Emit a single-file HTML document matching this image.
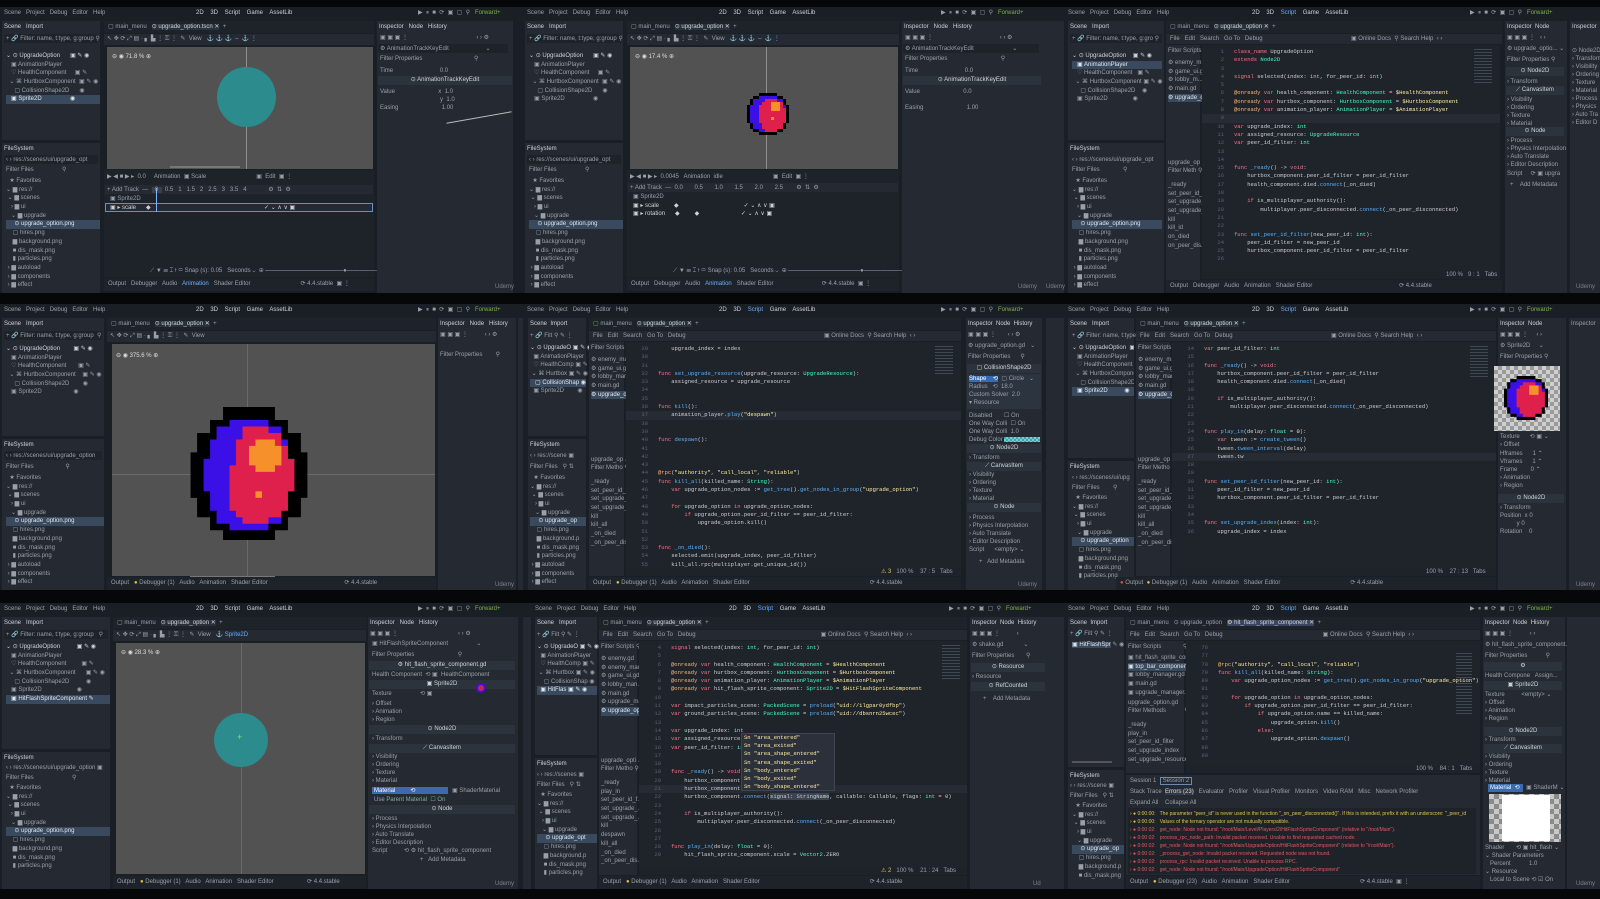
<!DOCTYPE html>
<html><head><meta charset="utf-8">
<style>
*{box-sizing:border-box}
body{margin:0;width:1600px;height:899px;background:#060708;position:relative;overflow:hidden;font-family:"Liberation Sans",sans-serif;font-size:6px;color:#9aa0a8}
.c{position:absolute;height:286px;background:#1a1e25;overflow:hidden}
.p{position:absolute;background:#242932}
.d{position:absolute;background:#1e232a}
.t{position:absolute;white-space:pre;line-height:8px}
.menu{position:absolute;left:0;top:0;right:0;height:13px;background:#1a1e25}
.sel{background:#3a4a5e;color:#dfe6ee}
.hl{color:#cfd3d8}
.vp{position:absolute;background:#525252}
.code{position:absolute;background:#1f232a;font-family:"Liberation Mono",monospace;font-size:5.5px;color:#cdcfd2;overflow:hidden}
.code div{height:8.3px;line-height:8.3px;white-space:pre}
.n{color:#5b6370;display:inline-block;width:22px;text-align:right;margin-right:10px}
.k{color:#ff7085}.f{color:#57b3ff}.y{color:#42ffc2}.s{color:#ffeda1}.a{color:#ffb373}.g{color:#8a919b}
.tree div{height:8.7px;line-height:8.7px;white-space:pre}
.btab{position:absolute;height:13px;background:#1e232a;line-height:13px;white-space:pre;padding-left:4px;overflow:hidden}
.ihead{position:absolute;height:9px;background:#2d333d;color:#cfd3d8;text-align:center;line-height:9px}
.udemy{position:absolute;color:#7d838b;font-size:6px}
</style></head><body>

<!-- Cell 1 -->
<div class="c" style="left:0;top:7px;width:523px">
 <div class="menu"><span class="t" style="left:4px;top:2px">Scene   Project   Debug   Editor   Help</span><span class="t hl" style="left:196px;top:2px">2D    3D    Script    Game    AssetLib</span><span class="t" style="left:418px;top:2px">▶  ⏸  ■  ⟳  ▣  ▢  ⚲   <span style="color:#7fb24a">Forward+</span></span></div>
 <div class="p" style="left:2px;top:14px;width:98px;height:119px"></div>
 <div class="t hl" style="left:4px;top:16px">Scene   Import</div>
 <div class="d" style="left:4px;top:27px;width:94px;height:9px"></div>
 <div class="t" style="left:6px;top:28px">+ 🔗 Filter: name, t:type, g:group ⚲</div>
 <div class="tree t" style="left:6px;top:45px;width:94px"><div class="hl">⌄ ⊙ UpgradeOption      ▣ ✎ ◉</div><div>   ▣ AnimationPlayer</div><div>   ♡ HealthComponent     ▣ ✎</div><div>  ⌄ ⌘ HurtboxComponent  ▣ ✎ ◉</div><div>     ▢ CollisionShape2D      ◉</div><div class="sel">   ▣ Sprite2D                 ◉</div></div>
 <div class="p" style="left:2px;top:136px;width:98px;height:150px"></div>
 <div class="t hl" style="left:4px;top:138px">FileSystem</div>
 <div class="d" style="left:4px;top:148px;width:94px;height:9px"></div>
 <div class="t" style="left:6px;top:149px">‹ › res://scenes/ui/upgrade_opt</div>
 <div class="t" style="left:6px;top:159px">Filter Files                 ⚲</div>
 <div class="tree t" style="left:6px;top:170px;width:94px"><div>  ★ Favorites</div><div>⌄ ▆ res://</div><div> ⌄ ▆ scenes</div><div>   › ▆ ui</div><div>   ⌄ ▆ upgrade</div><div class="sel">     ⊙ upgrade_option.png</div><div>    ▢ hires.png</div><div>    ▆ background.png</div><div>    ■ dis_mask.png</div><div>    ▮ particles.png</div><div> › ▆ autoload</div><div> › ▆ components</div><div> › ▆ effect</div></div>
 <div class="p" style="left:104px;top:14px;width:270px;height:12px;background:#1e232a"></div>
 <div class="t" style="left:108px;top:16px">▢ main_menu   <span class="hl" style="background:#2b313b">⊙ upgrade_option.tscn ✕</span>  +</div>
 <div class="p" style="left:104px;top:27px;width:270px;height:11px"></div>
 <div class="t" style="left:107px;top:28px">↖ ✥ ⟳ ⤢ ▤ · ▖ ▙ ⋮ ⚿ ⋮  ✎  View   <span style="color:#6ab0ff">⚓ ⚓ ⚓ ⇔ ⚓ ⋮</span></div>
 <div class="vp" style="left:107px;top:40px;width:266px;height:122px"></div>
 <div style="position:absolute;left:246px;top:40px;width:1px;height:122px;background:#8e8e8e"></div>
 <div style="position:absolute;left:217px;top:60px;width:59px;height:60px;border-radius:50%;background:#2b8b8d"></div>
 <div class="t" style="left:112px;top:46px;color:#ddd">⊖ ◉ 71.8 % ⊕</div>
 <div style="position:absolute;left:170px;top:159px;width:70px;height:2px;background:#777"></div>
 <div class="d" style="left:104px;top:163px;width:270px;height:107px"></div>
 <div class="t" style="left:107px;top:166px">▶ ◀ ■ ▶ ▸  0.0     Animation  ▣ Scale                              ▣  Edit  ▣ ⋮</div>
 <div class="p" style="left:105px;top:178px;width:268px;height:9px"></div>
 <div class="t" style="left:107px;top:179px">+ Add Track  —  <span style="background:#3a404a">  0  </span>  0.5   1   1.5   2   2.5   3   3.5   4             ⚙  ⇅  ⚙</div>
 <div class="t" style="left:110px;top:188px">▣ Sprite2D</div>
 <div style="position:absolute;left:105px;top:196px;width:268px;height:9px;border:1px solid #6a90c0;background:#242a33"></div>
 <div class="t" style="left:110px;top:197px;color:#cfd3d8">▣ ▸ scale      ◆                                                                    ✓ ⌄ ∧ ∨ ▣</div>
 <div style="position:absolute;left:156px;top:181px;width:1px;height:24px;background:#7fb4ff"></div>
 <div class="d" style="left:104px;top:258px;width:270px;height:12px"></div>
 <div class="t" style="left:150px;top:260px">⟋ ▼ ☰ ⌶ ⟊ ▭ Snap (s): 0.05   Seconds ⌄  ⊕ ━━━━━━━━━━━━━●━━━━━━━━━━━━ ⇥</div>
 <div class="btab" style="left:104px;top:271px;width:270px">Output   Debugger   Audio   <span style="color:#6ab0ff">Animation</span>   Shader Editor                              ⟳ 4.4.stable  ▣ ⋮</div>
 <div class="p" style="left:377px;top:14px;width:136px;height:272px"></div>
 <div class="t hl" style="left:379px;top:16px">Inspector   Node   History</div>
 <div class="t" style="left:380px;top:27px">▣ ▣ ▣ ⋮                                         ‹ › ⚙</div>
 <div class="d" style="left:378px;top:37px;width:130px;height:9px"></div>
 <div class="t" style="left:380px;top:38px">⚙ AnimationTrackKeyEdit                      ⌄</div>
 <div class="t" style="left:380px;top:48px">Filter Properties                               ⚲</div>
 <div class="t" style="left:380px;top:60px">Time                            0.0</div>
 <div class="ihead" style="left:378px;top:69px;width:134px">⊙ AnimationTrackKeyEdit</div>
 <div class="t" style="left:380px;top:81px">Value                          x  1.0<br>                                    y  1.0<br>Easing                          1.00</div>
 <div style="position:absolute;left:446px;top:110px;width:66px;height:1px;background:#bbb;transform:rotate(-10deg)"></div>
 <div class="udemy" style="left:495px;top:277px">Udemy</div>
</div>

<!-- Cell 2 -->
<div class="c" style="left:523px;top:7px;width:523px">
 <div class="menu"><span class="t" style="left:4px;top:2px">Scene   Project   Debug   Editor   Help</span><span class="t hl" style="left:196px;top:2px">2D    3D    Script    Game    AssetLib</span><span class="t" style="left:418px;top:2px">▶  ⏸  ■  ⟳  ▣  ▢  ⚲   <span style="color:#7fb24a">Forward+</span></span></div>
 <div class="p" style="left:2px;top:14px;width:98px;height:119px"></div>
 <div class="t hl" style="left:4px;top:16px">Scene   Import</div>
 <div class="d" style="left:4px;top:27px;width:94px;height:9px"></div>
 <div class="t" style="left:6px;top:28px">+ 🔗 Filter: name, t:type, g:group ⚲</div>
 <div class="tree t" style="left:6px;top:45px;width:94px"><div class="hl">⌄ ⊙ UpgradeOption      ▣ ✎ ◉</div><div>   ▣ AnimationPlayer</div><div>   ♡ HealthComponent     ▣ ✎</div><div>  ⌄ ⌘ HurtboxComponent  ▣ ✎ ◉</div><div>     ▢ CollisionShape2D      ◉</div><div>   ▣ Sprite2D                 ◉</div></div>
 <div class="p" style="left:2px;top:136px;width:98px;height:150px"></div>
 <div class="t hl" style="left:4px;top:138px">FileSystem</div>
 <div class="d" style="left:4px;top:148px;width:94px;height:9px"></div>
 <div class="t" style="left:6px;top:149px">‹ › res://scenes/ui/upgrade_opt</div>
 <div class="t" style="left:6px;top:159px">Filter Files                 ⚲</div>
 <div class="tree t" style="left:6px;top:170px;width:94px"><div>  ★ Favorites</div><div>⌄ ▆ res://</div><div> ⌄ ▆ scenes</div><div>   › ▆ ui</div><div>   ⌄ ▆ upgrade</div><div class="sel">     ⊙ upgrade_option.png</div><div>    ▢ hires.png</div><div>    ▆ background.png</div><div>    ■ dis_mask.png</div><div>    ▮ particles.png</div><div> › ▆ autoload</div><div> › ▆ components</div><div> › ▆ effect</div></div>
 <div class="p" style="left:104px;top:14px;width:272px;height:12px;background:#1e232a"></div>
 <div class="t" style="left:108px;top:16px">▢ main_menu   <span class="hl" style="background:#2b313b">⊙ upgrade_option ✕</span>  +</div>
 <div class="p" style="left:104px;top:27px;width:272px;height:11px"></div>
 <div class="t" style="left:107px;top:28px">↖ ✥ ⟳ ⤢ ▤ · ▖ ▙ ⋮ ⚿ ⋮  ✎  View   <span style="color:#6ab0ff">⚓ ⚓ ⚓ ⇔ ⚓ ⋮</span></div>
 <div class="vp" style="left:107px;top:40px;width:268px;height:122px"></div>
 <div style="position:absolute;left:243px;top:40px;width:1px;height:122px;background:#8e8e8e"></div>
 <svg style="position:absolute;left:224px;top:85px" width="42" height="44" viewBox="0 0 14 14"><path fill="#000" d="M4 0h6v1h2v1h1v2h1v6h-1v2h-1v1h-2v1H4v-1H2v-1H1v-2H0V4h1V2h1V1h2z"/><path fill="#3a10e6" d="M4 1h6v1h2v2h1v6h-1v2h-2v1H4v-1H2v-2H1V4h1V2h2z"/><path fill="#e0204c" d="M6 2h4v1h2v2h1v5h-1v2h-2v1H6v-1H5v-2H4V4h1V3h1z"/><rect fill="#f5902a" x="8" y="3" width="3" height="3"/><rect fill="#f5902a" x="8" y="8" width="1" height="1"/></svg>
 <div class="t" style="left:112px;top:46px;color:#ddd">⊖ ◉ 17.4 % ⊕</div>
 <div class="d" style="left:104px;top:163px;width:272px;height:107px"></div>
 <div class="t" style="left:107px;top:166px">▶ ◀ ■ ▶ ▸  0.0045   Animation  idle                              ▣  Edit  ▣ ⋮</div>
 <div class="p" style="left:105px;top:176px;width:270px;height:9px"></div>
 <div class="t" style="left:107px;top:177px">+ Add Track  —  0.0       0.5       1.0       1.5       2.0       2.5        ⚙  ⇅  ⚙</div>
 <div class="t" style="left:110px;top:186px">▣ Sprite2D</div>
 <div class="t" style="left:110px;top:195px;color:#cfd3d8">▣ ▸ scale         ◆                                       ✓ ⌄ ∧ ∨ ▣<br>▣ ▸ rotation      ◆         ◆                         ✓ ⌄ ∧ ∨ ▣</div>
 <div class="d" style="left:104px;top:258px;width:272px;height:12px"></div>
 <div class="t" style="left:150px;top:260px">⟋ ▼ ☰ ⌶ ⟊ ▭ Snap (s): 0.05   Seconds ⌄  ⊕ ━━━━━━━━━━━━●━━━━━━━━ ⇥</div>
 <div class="btab" style="left:104px;top:271px;width:272px">Output   Debugger   Audio   <span style="color:#6ab0ff">Animation</span>   Shader Editor                             ⟳ 4.4.stable  ▣ ⋮</div>
 <div class="p" style="left:379px;top:14px;width:144px;height:272px"></div>
 <div class="t hl" style="left:381px;top:16px">Inspector   Node   History</div>
 <div class="t" style="left:382px;top:27px">▣ ▣ ▣ ⋮                                        ‹ › ⚙</div>
 <div class="d" style="left:380px;top:37px;width:136px;height:9px"></div>
 <div class="t" style="left:382px;top:38px">⚙ AnimationTrackKeyEdit                       ⌄</div>
 <div class="t" style="left:382px;top:48px">Filter Properties                                ⚲</div>
 <div class="t" style="left:382px;top:60px">Time                            0.0</div>
 <div class="ihead" style="left:380px;top:69px;width:138px">⊙ AnimationTrackKeyEdit</div>
 <div class="t" style="left:382px;top:81px">Value                          0.0<br><br>Easing                          1.00</div>
 <div class="udemy" style="left:495px;top:277px">Udemy</div>
</div>

<!-- Cell 3 -->
<div class="c" style="left:1046px;top:7px;width:554px">
 <div class="p" style="left:0;top:14px;width:18px;height:272px"></div>
 <div class="menu" style="left:20px"><span class="t" style="left:2px;top:2px">Scene   Project   Debug   Editor   Help</span><span class="t hl" style="left:186px;top:2px">2D    3D    <span style="color:#6ab0ff">Script</span>    Game    AssetLib</span><span class="t" style="left:404px;top:2px">▶  ⏸  ■  ⟳  ▣  ▢  ⚲   <span style="color:#7fb24a">Forward+</span></span></div>
 <div class="p" style="left:22px;top:14px;width:96px;height:119px"></div>
 <div class="t hl" style="left:24px;top:16px">Scene   Import</div>
 <div class="d" style="left:24px;top:27px;width:92px;height:9px"></div>
 <div class="t" style="left:26px;top:28px">+ 🔗 Filter: name, t:type, g:gro ⚲</div>
 <div class="tree t" style="left:26px;top:45px;width:90px"><div class="hl">⌄ ⊙ UpgradeOption    ▣ ✎ ◉</div><div class="sel">   ▣ AnimationPlayer</div><div>   ♡ HealthComponent   ▣ ✎</div><div>  ⌄ ⌘ HurtboxComponent ▣ ✎ ◉</div><div>     ▢ CollisionShape2D    ◉</div><div>   ▣ Sprite2D               ◉</div></div>
 <div class="p" style="left:22px;top:136px;width:96px;height:150px"></div>
 <div class="t hl" style="left:24px;top:138px">FileSystem</div>
 <div class="t" style="left:26px;top:149px">‹ › res://scenes/ui/upgrade_opt</div>
 <div class="t" style="left:26px;top:159px">Filter Files              ⚲</div>
 <div class="tree t" style="left:26px;top:170px;width:90px"><div>  ★ Favorites</div><div>⌄ ▆ res://</div><div> ⌄ ▆ scenes</div><div>   › ▆ ui</div><div>   ⌄ ▆ upgrade</div><div class="sel">     ⊙ upgrade_option.png</div><div>    ▢ hires.png</div><div>    ▆ background.png</div><div>    ■ dis_mask.png</div><div>    ▮ particles.png</div><div> › ▆ autoload</div><div> › ▆ components</div><div> › ▆ effect</div></div>
 <div class="d" style="left:120px;top:14px;width:336px;height:12px"></div>
 <div class="t" style="left:124px;top:16px">▢ main_menu   <span class="hl" style="background:#2b313b">⊙ upgrade_option ✕</span>  +</div>
 <div class="p" style="left:120px;top:27px;width:336px;height:10px"></div>
 <div class="t" style="left:124px;top:28px">File   Edit   Search   Go To   Debug                                                     ▣ Online Docs  ⚲ Search Help  ‹ ›</div>
 <div class="p" style="left:120px;top:38px;width:34px;height:236px"></div>
 <div class="t" style="left:122px;top:40px">Filter Scripts ⚲</div>
 <div class="tree t" style="left:122px;top:52px"><div>⚙ enemy_m...</div><div>⚙ game_ui.gd</div><div>⚙ lobby_m...</div><div>⚙ main.gd</div><div class="sel">⚙ upgrade_o...</div></div>
 <div class="t" style="left:122px;top:152px">upgrade_op ⇵<br>Filter Meth ⚲</div>
 <div class="tree t" style="left:122px;top:174px"><div>_ready</div><div>set_peer_id_f...</div><div>set_upgrade_...</div><div>set_upgrade_...</div><div>kill</div><div>kill_id</div><div>on_died</div><div>on_peer_dis...</div></div>
 <div class="code" style="left:156px;top:38px;width:298px;height:226px;padding-top:3px">
<div><span class="n">1</span><span class="k">class_name</span> UpgradeOption</div>
<div><span class="n">2</span><span class="k">extends</span> <span class="y">Node2D</span></div>
<div><span class="n">3</span></div>
<div><span class="n">4</span><span class="k">signal</span> selected(index: <span class="y">int</span>, for_peer_id: <span class="y">int</span>)</div>
<div><span class="n">5</span></div>
<div><span class="n">6</span><span class="a">@onready</span> <span class="k">var</span> health_component: <span class="y">HealthComponent</span> = <span class="s">$HealthComponent</span></div>
<div><span class="n">7</span><span class="a">@onready</span> <span class="k">var</span> hurtbox_component: <span class="y">HurtboxComponent</span> = <span class="s">$HurtboxComponent</span></div>
<div><span class="n">8</span><span class="a">@onready</span> <span class="k">var</span> animation_player: <span class="y">AnimationPlayer</span> = <span class="s">$AnimationPlayer</span></div>
<div style="background:#262b34"><span class="n">9</span></div>
<div><span class="n">10</span><span class="k">var</span> upgrade_index: <span class="y">int</span></div>
<div><span class="n">11</span><span class="k">var</span> assigned_resource: <span class="y">UpgradeResource</span></div>
<div><span class="n">12</span><span class="k">var</span> peer_id_filter: <span class="y">int</span></div>
<div><span class="n">13</span></div>
<div><span class="n">14</span></div>
<div><span class="n">15</span><span class="k">func</span> <span class="f">_ready</span>() -&gt; <span class="k">void</span>:</div>
<div><span class="n">16</span>    hurtbox_component.peer_id_filter = peer_id_filter</div>
<div><span class="n">17</span>    health_component.died.<span class="f">connect</span>(_on_died)</div>
<div><span class="n">18</span></div>
<div><span class="n">19</span>    <span class="k">if</span> is_multiplayer_authority():</div>
<div><span class="n">20</span>        multiplayer.peer_disconnected.<span class="f">connect</span>(_on_peer_disconnected)</div>
<div><span class="n">21</span></div>
<div><span class="n">22</span></div>
<div><span class="n">23</span><span class="k">func</span> <span class="f">set_peer_id_filter</span>(new_peer_id: <span class="y">int</span>):</div>
<div><span class="n">24</span>    peer_id_filter = new_peer_id</div>
<div><span class="n">25</span>    hurtbox_component.peer_id_filter = peer_id_filter</div>
<div><span class="n">26</span></div>
 </div>
 <div style="position:absolute;left:428px;top:42px;width:18px;height:34px;background:repeating-linear-gradient(#56606c 0 1px,transparent 1px 3px);opacity:.6"></div>
 <div class="d" style="left:156px;top:264px;width:298px;height:8px"></div>
 <div class="t" style="left:400px;top:264px">100 %   9 : 1   Tabs</div>
 <div class="btab" style="left:120px;top:273px;width:336px">Output   Debugger   Audio   Animation   Shader Editor                                                    ⟳ 4.4.stable</div>
 <div class="p" style="left:459px;top:14px;width:62px;height:272px"></div>
 <div class="t hl" style="left:461px;top:16px">Inspector  Node</div>
 <div class="t" style="left:461px;top:27px">▣ ▣ ▣ ⋮   ‹ ›</div>
 <div class="t" style="left:461px;top:38px">⚙ upgrade_optio... ⌄</div>
 <div class="t" style="left:461px;top:49px">Filter Properties ⚲</div>
 <div class="ihead" style="left:460px;top:60px;width:58px">⊙ Node2D</div>
 <div class="t" style="left:461px;top:71px">› Transform</div>
 <div class="ihead" style="left:460px;top:79px;width:58px">⟋ CanvasItem</div>
 <div class="t" style="left:461px;top:89px">› Visibility<br>› Ordering<br>› Texture<br>› Material</div>
 <div class="ihead" style="left:460px;top:120px;width:58px">⊙ Node</div>
 <div class="t" style="left:461px;top:130px">› Process<br>› Physics Interpolation<br>› Auto Translate<br>› Editor Description</div>
 <div class="t" style="left:461px;top:163px">Script     ⟳ ▣ upgra</div>
 <div class="t" style="left:464px;top:174px">+    Add Metadata</div>
 <div class="p" style="left:524px;top:14px;width:30px;height:272px"></div>
 <div class="t hl" style="left:526px;top:16px">Inspector</div>
 <div class="t" style="left:526px;top:40px">⊙ Node2D<br>› Transform<br>› Visibility<br>› Ordering<br>› Texture<br>› Material<br>› Process<br>› Physics<br>› Auto Tra<br>› Editor D</div>
 <div class="udemy" style="left:0px;top:277px">Udemy</div>
 <div class="udemy" style="left:530px;top:277px">Udemy</div>
</div>

<!-- Cell 4 -->
<div class="c" style="left:0;top:304px;width:523px">
 <div class="menu"><span class="t" style="left:4px;top:2px">Scene   Project   Debug   Editor   Help</span><span class="t hl" style="left:196px;top:2px">2D    3D    Script    Game    AssetLib</span><span class="t" style="left:418px;top:2px">▶  ⏸  ■  ⟳  ▣  ▢  ⚲   <span style="color:#7fb24a">Forward+</span></span></div>
 <div class="p" style="left:2px;top:14px;width:102px;height:118px"></div>
 <div class="t hl" style="left:4px;top:16px">Scene   Import</div>
 <div class="d" style="left:4px;top:27px;width:98px;height:9px"></div>
 <div class="t" style="left:6px;top:28px">+ 🔗 Filter: name, t:type, g:group  ⚲</div>
 <div class="tree t" style="left:6px;top:41px;width:98px"><div class="hl">⌄ ⊙ UpgradeOption        ▣ ✎ ◉</div><div>   ▣ AnimationPlayer</div><div>   ♡ HealthComponent       ▣ ✎</div><div>  ⌄ ⌘ HurtboxComponent    ▣ ✎ ◉</div><div>     ▢ CollisionShape2D        ◉</div><div>   ▣ Sprite2D                   ◉</div></div>
 <div class="p" style="left:2px;top:135px;width:102px;height:151px"></div>
 <div class="t hl" style="left:4px;top:137px">FileSystem</div>
 <div class="d" style="left:4px;top:147px;width:98px;height:9px"></div>
 <div class="t" style="left:6px;top:148px">‹ › res://scenes/ui/upgrade_option</div>
 <div class="t" style="left:6px;top:159px">Filter Files                   ⚲</div>
 <div class="tree t" style="left:6px;top:170px;width:98px"><div>  ★ Favorites</div><div>⌄ ▆ res://</div><div> ⌄ ▆ scenes</div><div>   › ▆ ui</div><div>   ⌄ ▆ upgrade</div><div class="sel">     ⊙ upgrade_option.png</div><div>    ▢ hires.png</div><div>    ▆ background.png</div><div>    ■ dis_mask.png</div><div>    ▮ particles.png</div><div> › ▆ autoload</div><div> › ▆ components</div><div> › ▆ effect</div></div>
 <div class="d" style="left:107px;top:14px;width:329px;height:12px"></div>
 <div class="t" style="left:111px;top:16px">▢ main_menu   <span class="hl" style="background:#2b313b">⊙ upgrade_option ✕</span>  +</div>
 <div class="p" style="left:107px;top:27px;width:329px;height:11px"></div>
 <div class="t" style="left:110px;top:28px">↖ ✥ ⟳ ⤢ ▤ · ▖ ▙ ⋮ ⚿ ⋮  ✎  View</div>
 <div class="vp" style="left:112px;top:40px;width:323px;height:232px"></div>
 <div style="position:absolute;left:247px;top:40px;width:1px;height:232px;background:#6a6a6a"></div>
 <div style="position:absolute;left:112px;top:170px;width:323px;height:1px;background:#6a6a6a"></div>
 <svg style="position:absolute;left:184px;top:103px" width="130" height="133" viewBox="0 0 20 20.5"><path fill="#000" d="M6 0h8v2h2v2h2v3h1v7h-1v3h-2v2h-2v2H6v-2H4v-2H2v-3H1V7h1V4h2V2h2z"/><path fill="#3a10e6" d="M7 2h6v1h2v2h1v3h1v5h-1v3h-1v2h-2v1H7v-1H5v-2H4v-3H3V8h1V5h1V3h2z"/><path fill="#e0204c" d="M9 3h4v1h2v2h1v2h1v5h-1v3h-1v1h-2v1H9v-1H8v-1H7V9h1V5h1z"/><path fill="#f5902a" d="M11 5h3v1h1v3h-1v1h-3v-1h-1V6h1z"/><rect fill="#f5902a" x="11" y="13" width="1" height="1"/></svg>
 <div class="t" style="left:116px;top:48px;color:#ddd">⊖ ◉ 375.6 % ⊕</div>
 <div style="position:absolute;left:190px;top:272px;width:85px;height:2px;background:#777"></div>
 <div class="btab" style="left:107px;top:273px;width:329px">Output   <span style="color:#e0c050">●</span> Debugger (1)   Audio   Animation   Shader Editor                                              ⟳ 4.4.stable</div>
 <div class="p" style="left:438px;top:14px;width:78px;height:272px"></div>
 <div class="t hl" style="left:440px;top:16px">Inspector   Node   History</div>
 <div class="t" style="left:440px;top:27px">▣ ▣ ▣ ⋮          ‹ › ⚙</div>
 <div class="t" style="left:440px;top:47px">Filter Properties        ⚲</div>
 <div class="p" style="left:518px;top:14px;width:5px;height:272px"></div>
 <div class="udemy" style="left:495px;top:278px">Udemy</div>
</div>

<!-- Cell 5 -->
<div class="c" style="left:523px;top:304px;width:523px">
 <div class="menu"><span class="t" style="left:4px;top:2px">Scene   Project   Debug   Editor   Help</span><span class="t hl" style="left:196px;top:2px">2D    3D    <span style="color:#6ab0ff">Script</span>    Game    AssetLib</span><span class="t" style="left:418px;top:2px">▶  ⏸  ■  ⟳  ▣  ▢  ⚲   <span style="color:#7fb24a">Forward+</span></span></div>
 <div class="p" style="left:5px;top:14px;width:58px;height:118px"></div>
 <div class="t hl" style="left:7px;top:16px">Scene  Import</div>
 <div class="t" style="left:7px;top:28px">+ 🔗 Filt ⚲ ✎ ⋮</div>
 <div class="tree t" style="left:7px;top:40px;width:56px"><div class="hl">⌄ ⊙ UpgradeO ▣ ✎ ◉</div><div>  ▣ AnimationPlayer</div><div>  ♡ HealthComp ▣ ✎</div><div> ⌄ ⌘ Hurtbox ▣ ✎ ◉</div><div class="sel">   ▢ CollisionShap ◉</div><div>  ▣ Sprite2D        ◉</div></div>
 <div class="p" style="left:5px;top:135px;width:58px;height:151px"></div>
 <div class="t hl" style="left:7px;top:137px">FileSystem</div>
 <div class="t" style="left:7px;top:148px">‹ › res://scene ▣</div>
 <div class="t" style="left:7px;top:159px">Filter Files   ⚲ ⇅</div>
 <div class="tree t" style="left:7px;top:170px;width:56px"><div>  ★ Favorites</div><div>⌄ ▆ res://</div><div> ⌄ ▆ scenes</div><div>   › ▆ ui</div><div>   ⌄ ▆ upgrade</div><div class="sel">     ⊙ upgrade_op</div><div>    ▢ hires.png</div><div>    ▆ background.p</div><div>    ■ dis_mask.png</div><div>    ▮ particles.png</div><div> › ▆ autoload</div><div> › ▆ components</div><div> › ▆ effect</div></div>
 <div class="d" style="left:66px;top:14px;width:372px;height:12px"></div>
 <div class="t" style="left:70px;top:16px"><span style="color:#7fb24a">▢</span> main_menu   <span class="hl" style="background:#2b313b">⊙ upgrade_option ✕</span>  +</div>
 <div class="p" style="left:66px;top:27px;width:372px;height:10px"></div>
 <div class="t" style="left:70px;top:28px">File   Edit   Search   Go To   Debug                                                                                   ▣ Online Docs  ⚲ Search Help  ‹ ›</div>
 <div class="p" style="left:66px;top:38px;width:35px;height:234px"></div>
 <div class="t" style="left:68px;top:40px">Filter Scripts ⚲</div>
 <div class="tree t" style="left:68px;top:52px"><div>⚙ enemy_ma...</div><div>⚙ game_ui.gd</div><div>⚙ lobby_man...</div><div>⚙ main.gd</div><div class="sel">⚙ upgrade_o...</div></div>
 <div class="t" style="left:68px;top:152px">upgrade_op ⇵<br>Filter Metho ⚲</div>
 <div class="tree t" style="left:68px;top:174px"><div>_ready</div><div>set_peer_id_f...</div><div>set_upgrade_...</div><div>set_upgrade_...</div><div>kill</div><div>kill_all</div><div>_on_died</div><div>_on_peer_dis...</div></div>
 <div class="code" style="left:103px;top:38px;width:335px;height:226px;padding-top:3px">
<div><span class="n">29</span>    upgrade_index = index</div>
<div><span class="n">30</span></div>
<div><span class="n">31</span></div>
<div><span class="n">32</span><span class="k">func</span> <span class="f">set_upgrade_resource</span>(upgrade_resource: <span class="y">UpgradeResource</span>):</div>
<div><span class="n">33</span>    assigned_resource = upgrade_resource</div>
<div><span class="n">34</span></div>
<div><span class="n">35</span></div>
<div><span class="n">36</span><span class="k">func</span> <span class="f">kill</span>():</div>
<div style="background:#262b34"><span class="n">37</span>    animation_player.<span class="f">play</span>(<span class="s">"despawn"</span>)</div>
<div><span class="n">38</span></div>
<div><span class="n">39</span></div>
<div><span class="n">40</span><span class="k">func</span> <span class="f">despawn</span>():</div>
<div><span class="n">41</span>    </div>
<div><span class="n">42</span></div>
<div><span class="n">43</span></div>
<div><span class="n">44</span><span class="a">@rpc</span>(<span class="s">"authority"</span>, <span class="s">"call_local"</span>, <span class="s">"reliable"</span>)</div>
<div><span class="n">45</span><span class="k">func</span> <span class="f">kill_all</span>(killed_name: <span class="y">String</span>):</div>
<div><span class="n">46</span>    <span class="k">var</span> upgrade_option_nodes := <span class="f">get_tree</span>().<span class="f">get_nodes_in_group</span>(<span class="s">"upgrade_option"</span>)</div>
<div><span class="n">47</span></div>
<div><span class="n">48</span>    <span class="k">for</span> upgrade_option <span class="k">in</span> upgrade_option_nodes:</div>
<div><span class="n">49</span>        <span class="k">if</span> upgrade_option.peer_id_filter == peer_id_filter:</div>
<div><span class="n">50</span>            upgrade_option.kill()</div>
<div><span class="n">51</span></div>
<div><span class="n">52</span></div>
<div><span class="n">53</span><span class="k">func</span> <span class="f">_on_died</span>():</div>
<div><span class="n">54</span>    selected.emit(upgrade_index, peer_id_filter)</div>
<div><span class="n">55</span>    kill_all.rpc(multiplayer.get_unique_id())</div>
 </div>
 <div style="position:absolute;left:412px;top:42px;width:18px;height:30px;background:repeating-linear-gradient(#56606c 0 1px,transparent 1px 3px);opacity:.6"></div>
 <div class="d" style="left:103px;top:264px;width:335px;height:8px"></div>
 <div class="t" style="left:358px;top:264px"><span style="color:#e0c050">⚠ 3</span>   100 %    37 : 5   Tabs</div>
 <div class="btab" style="left:66px;top:273px;width:372px">Output   <span style="color:#e0c050">●</span> Debugger (1)   Audio   Animation   Shader Editor                                                                        ⟳ 4.4.stable</div>
 <div class="p" style="left:443px;top:14px;width:76px;height:272px"></div>
 <div class="t hl" style="left:445px;top:16px">Inspector  Node  History</div>
 <div class="t" style="left:445px;top:27px">▣ ▣ ▣ ⋮       ‹ › ⚙</div>
 <div class="t" style="left:445px;top:38px">⚙ upgrade_option.gd   ⌄</div>
 <div class="t" style="left:445px;top:49px">Filter Properties      ⚲</div>
 <div class="ihead" style="left:444px;top:60px;width:74px">▢ CollisionShape2D</div>
 <div style="position:absolute;left:444px;top:70px;width:74px;height:35px;background:#2c3440"></div>
 <div class="t" style="left:446px;top:71px"><span style="background:#3a6ab0;color:#fff">Shape    ⟲</span>  ▢ Circle   ⌄<br>Radius   ⟲  18.0<br>Custom Solver  2.0<br>▾ Resource</div>
 <div class="t" style="left:446px;top:108px">Disabled       ☐ On<br>One Way Colli  ☐ On<br>One Way Colli  1.0<br>Debug Color</div>
 <div style="position:absolute;left:481px;top:133px;width:36px;height:5px;background:repeating-conic-gradient(#6fd0d0 0 25%,#3fa8a8 0 50%) 0 0/4px 4px"></div>
 <div class="ihead" style="left:444px;top:140px;width:74px">⊙ Node2D</div>
 <div class="t" style="left:446px;top:150px">› Transform</div>
 <div class="ihead" style="left:444px;top:158px;width:74px">⟋ CanvasItem</div>
 <div class="t" style="left:446px;top:167px">› Visibility<br>› Ordering<br>› Texture<br>› Material</div>
 <div class="ihead" style="left:444px;top:199px;width:74px">⊙ Node</div>
 <div class="t" style="left:446px;top:210px">› Process<br>› Physics Interpolation<br>› Auto Translate<br>› Editor Description<br>Script      &lt;empty&gt; ⌄</div>
 <div class="t" style="left:456px;top:254px">+   Add Metadata</div>
 <div class="udemy" style="left:495px;top:278px">Udemy</div>
</div>

<!-- Cell 6 -->
<div class="c" style="left:1046px;top:304px;width:554px">
 <div class="p" style="left:0;top:14px;width:18px;height:272px"></div>
 <div class="menu" style="left:20px"><span class="t" style="left:2px;top:2px">Scene   Project   Debug   Editor   Help</span><span class="t hl" style="left:186px;top:2px">2D    3D    <span style="color:#6ab0ff">Script</span>    Game    AssetLib</span><span class="t" style="left:404px;top:2px">▶  ⏸  ■  ⟳  ▣  ▢  ⚲   <span style="color:#7fb24a">Forward+</span></span></div>
 <div class="p" style="left:22px;top:14px;width:66px;height:140px"></div>
 <div class="t hl" style="left:24px;top:16px">Scene   Import</div>
 <div class="t" style="left:26px;top:28px">+ 🔗 Filter: name, t:type ⚲</div>
 <div class="tree t" style="left:26px;top:40px;width:62px;overflow:hidden"><div class="hl">⌄ ⊙ UpgradeOption  ▣ ✎</div><div>   ▣ AnimationPlayer</div><div>   ♡ HealthComponent</div><div>  ⌄ ⌘ HurtboxCompone</div><div>     ▢ CollisionShape2D</div><div class="sel">   ▣ Sprite2D          ◉</div></div>
 <div class="p" style="left:22px;top:157px;width:66px;height:129px"></div>
 <div class="t hl" style="left:24px;top:159px">FileSystem</div>
 <div class="t" style="left:26px;top:170px">‹ › res://scenes/ui/upg</div>
 <div class="t" style="left:26px;top:180px">Filter Files        ⚲</div>
 <div class="tree t" style="left:26px;top:190px;width:62px"><div>  ★ Favorites</div><div>⌄ ▆ res://</div><div> ⌄ ▆ scenes</div><div>   › ▆ ui</div><div>   ⌄ ▆ upgrade</div><div class="sel">     ⊙ upgrade_option</div><div>    ▢ hires.png</div><div>    ▆ background.png</div><div>    ■ dis_mask.png</div><div>    ▮ particles.png</div></div>
 <div class="d" style="left:90px;top:14px;width:360px;height:12px"></div>
 <div class="t" style="left:94px;top:16px">▢ main_menu   <span class="hl" style="background:#2b313b">⊙ upgrade_option ✕</span>  +</div>
 <div class="p" style="left:90px;top:27px;width:360px;height:10px"></div>
 <div class="t" style="left:94px;top:28px">File   Edit   Search   Go To   Debug                                                           ▣ Online Docs  ⚲ Search Help  ‹ ›</div>
 <div class="p" style="left:90px;top:38px;width:34px;height:234px"></div>
 <div class="t" style="left:92px;top:40px">Filter Scripts ⚲</div>
 <div class="tree t" style="left:92px;top:52px"><div>⚙ enemy_ma...</div><div>⚙ game_ui.gd</div><div>⚙ lobby_man...</div><div>⚙ main.gd</div><div class="sel">⚙ upgrade_o...</div></div>
 <div class="t" style="left:92px;top:152px">upgrade_op ⇵<br>Filter Metho ⚲</div>
 <div class="tree t" style="left:92px;top:174px"><div>_ready</div><div>set_peer_id_f...</div><div>set_upgrade_...</div><div>set_upgrade_...</div><div>kill</div><div>kill_all</div><div>_on_died</div><div>_on_peer_dis...</div></div>
 <div class="code" style="left:126px;top:38px;width:324px;height:226px;padding-top:3px">
<div><span class="n">14</span><span class="k">var</span> peer_id_filter: <span class="y">int</span></div>
<div><span class="n">15</span></div>
<div><span class="n">16</span><span class="k">func</span> <span class="f">_ready</span>() -&gt; <span class="k">void</span>:</div>
<div><span class="n">17</span>    hurtbox_component.peer_id_filter = peer_id_filter</div>
<div><span class="n">18</span>    health_component.died.<span class="f">connect</span>(_on_died)</div>
<div><span class="n">19</span></div>
<div><span class="n">20</span>    <span class="k">if</span> is_multiplayer_authority():</div>
<div><span class="n">21</span>        multiplayer.peer_disconnected.<span class="f">connect</span>(_on_peer_disconnected)</div>
<div><span class="n">22</span></div>
<div><span class="n">23</span></div>
<div><span class="n">24</span><span class="k">func</span> <span class="f">play_in</span>(delay: <span class="y">float</span> = <span class="s">0</span>):</div>
<div><span class="n">25</span>    <span class="k">var</span> tween := <span class="f">create_tween</span>()</div>
<div><span class="n">26</span>    tween.<span class="f">tween_interval</span>(delay)</div>
<div style="background:#262b34"><span class="n">27</span>    tween.tw</div>
<div><span class="n">28</span></div>
<div><span class="n">29</span></div>
<div><span class="n">30</span><span class="k">func</span> <span class="f">set_peer_id_filter</span>(new_peer_id: <span class="y">int</span>):</div>
<div><span class="n">31</span>    peer_id_filter = new_peer_id</div>
<div><span class="n">32</span>    hurtbox_component.peer_id_filter = peer_id_filter</div>
<div><span class="n">33</span></div>
<div><span class="n">34</span></div>
<div><span class="n">35</span><span class="k">func</span> <span class="f">set_upgrade_index</span>(index: <span class="y">int</span>):</div>
<div><span class="n">36</span>    upgrade_index = index</div>
 </div>
 <div style="position:absolute;left:424px;top:42px;width:18px;height:32px;background:repeating-linear-gradient(#56606c 0 1px,transparent 1px 3px);opacity:.6"></div>
 <div class="d" style="left:126px;top:264px;width:324px;height:8px"></div>
 <div class="t" style="left:380px;top:264px">100 %    27 : 13   Tabs</div>
 <div class="btab" style="left:70px;top:273px;width:380px"><span style="color:#e05050">●</span> Output  <span style="color:#e0c050">●</span> Debugger (1)   Audio   Animation   Shader Editor                                          ⟳ 4.4.stable</div>
 <div class="p" style="left:452px;top:14px;width:68px;height:272px"></div>
 <div class="t hl" style="left:454px;top:16px">Inspector  Node</div>
 <div class="t" style="left:454px;top:27px">▣ ▣ ▣ ⋮     ‹ ›</div>
 <div class="t" style="left:454px;top:38px">⚙ Sprite2D     ⌄</div>
 <div class="t" style="left:454px;top:49px">Filter Properties ⚲</div>
 <div style="position:absolute;left:448px;top:62px;width:66px;height:65px;background:repeating-conic-gradient(#9a9a9a 0 25%,#cfcfcf 0 50%) 0 0/8px 8px"></div>
 <svg style="position:absolute;left:458px;top:72px" width="44" height="44" viewBox="0 0 14 14"><path fill="#000" d="M4 0h6v1h2v1h1v2h1v6h-1v2h-1v1h-2v1H4v-1H2v-1H1v-2H0V4h1V2h1V1h2z"/><path fill="#3a10e6" d="M4 1h6v1h2v2h1v6h-1v2h-2v1H4v-1H2v-2H1V4h1V2h2z"/><path fill="#e0204c" d="M6 2h4v1h2v2h1v5h-1v2h-2v1H6v-1H5v-2H4V4h1V3h1z"/><rect fill="#f5902a" x="8" y="3" width="3" height="3"/></svg>
 <div class="t" style="left:454px;top:129px">Texture      ⟲ ▣ ⌄<br>› Offset</div>
 <div class="t" style="left:454px;top:146px">Hframes      1 ⌃<br>Vframes      1 ⌃<br>Frame        0 ⌃<br>› Animation<br>› Region</div>
 <div class="ihead" style="left:452px;top:190px;width:66px">⊙ Node2D</div>
 <div class="t" style="left:454px;top:200px">› Transform<br>Position  x 0<br>          y 0<br>Rotation    0</div>
 <div class="p" style="left:523px;top:14px;width:31px;height:272px"></div>
 <div class="t" style="left:525px;top:16px">Inspector</div>
 <div class="udemy" style="left:530px;top:278px">Udemy</div>
</div>

<!-- Cell 7 -->
<div class="c" style="left:0;top:603px;width:523px">
 <div class="menu"><span class="t" style="left:4px;top:2px">Scene   Project   Debug   Editor   Help</span><span class="t hl" style="left:196px;top:2px">2D    3D    Script    Game    AssetLib</span><span class="t" style="left:418px;top:2px">▶  ⏸  ■  ⟳  ▣  ▢  ⚲   <span style="color:#7fb24a">Forward+</span></span></div>
 <div class="p" style="left:2px;top:14px;width:108px;height:132px"></div>
 <div class="t hl" style="left:4px;top:16px">Scene   Import</div>
 <div class="d" style="left:4px;top:27px;width:104px;height:9px"></div>
 <div class="t" style="left:6px;top:28px">+ 🔗 Filter: name, t:type, g:group   ⚲</div>
 <div class="tree t" style="left:6px;top:40px;width:104px"><div class="hl">⌄ ⊙ UpgradeOption          ▣ ✎ ◉</div><div>   ▣ AnimationPlayer</div><div>   ♡ HealthComponent         ▣ ✎</div><div>  ⌄ ⌘ HurtboxComponent      ▣ ✎ ◉</div><div>     ▢ CollisionShape2D          ◉</div><div>   ▣ Sprite2D                     ◉</div><div class="sel">   ▣ HitFlashSpriteComponent ✎</div></div>
 <div class="p" style="left:2px;top:149px;width:108px;height:137px"></div>
 <div class="t hl" style="left:4px;top:151px">FileSystem</div>
 <div class="t" style="left:6px;top:161px">‹ › res://scenes/ui/upgrade_option ▣</div>
 <div class="t" style="left:6px;top:171px">Filter Files                       ⚲</div>
 <div class="tree t" style="left:6px;top:181px;width:104px"><div>  ★ Favorites</div><div>⌄ ▆ res://</div><div> ⌄ ▆ scenes</div><div>   › ▆ ui</div><div>   ⌄ ▆ upgrade</div><div class="sel">     ⊙ upgrade_option.png</div><div>    ▢ hires.png</div><div>    ▆ background.png</div><div>    ■ dis_mask.png</div><div>    ▮ particles.png</div></div>
 <div class="d" style="left:113px;top:14px;width:253px;height:12px"></div>
 <div class="t" style="left:117px;top:16px">▢ main_menu   <span class="hl" style="background:#2b313b">⊙ upgrade_option ✕</span>  +</div>
 <div class="p" style="left:113px;top:27px;width:253px;height:11px"></div>
 <div class="t" style="left:116px;top:28px">↖ ✥ ⟳ ⤢ ▤ · ▖ ▙ ⋮ ⚿ ⋮  ✎  View   <span style="color:#6ab0ff">⚓ Sprite2D</span></div>
 <div class="vp" style="left:116px;top:40px;width:249px;height:231px"></div>
 <div style="position:absolute;left:241px;top:40px;width:1px;height:231px;background:#6a6a6a"></div>
 <div style="position:absolute;left:214px;top:110px;width:54px;height:54px;border-radius:50%;background:#2b8b8d"></div>
 <div class="t" style="left:237px;top:130px;color:#7fe07f;font-size:9px">+</div>
 <div class="t" style="left:121px;top:46px;color:#ddd">⊖ ◉ 28.3 % ⊕</div>
 <div class="btab" style="left:113px;top:273px;width:253px">Output   <span style="color:#e0c050">●</span> Debugger (1)   Audio   Animation   Shader Editor                    ⟳ 4.4.stable</div>
 <div class="p" style="left:368px;top:14px;width:150px;height:272px"></div>
 <div class="t hl" style="left:370px;top:16px">Inspector   Node   History</div>
 <div class="t" style="left:370px;top:27px">▣ ▣ ▣ ⋮                                    ‹ › ⚙</div>
 <div class="t" style="left:372px;top:37px">▣ HitFlashSpriteComponent                 ⌄</div>
 <div class="t" style="left:372px;top:48px">Filter Properties                          ⚲</div>
 <div class="ihead" style="left:369px;top:58px;width:146px">⚙ hit_flash_sprite_component.gd</div>
 <div class="t" style="left:372px;top:68px">Health Component  ⟲ ▣  HealthComponent</div>
 <div class="ihead" style="left:369px;top:77px;width:146px">▣ Sprite2D</div>
 <div class="t" style="left:372px;top:87px">Texture                 ⟲ ▣</div>
 <div style="position:absolute;left:476px;top:80px;width:10px;height:10px;border-radius:50%;background:#d0204c;border:2px solid #3a10e6"></div>
 <div class="t" style="left:372px;top:97px">› Offset<br>› Animation<br>› Region</div>
 <div class="ihead" style="left:369px;top:122px;width:146px">⊙ Node2D</div>
 <div class="t" style="left:372px;top:132px">› Transform</div>
 <div class="ihead" style="left:369px;top:141px;width:146px">⟋ CanvasItem</div>
 <div class="t" style="left:372px;top:150px">› Visibility<br>› Ordering<br>› Texture<br>› Material</div>
 <div style="position:absolute;left:372px;top:184px;width:76px;height:7px;background:#3a6ab0"></div>
 <div class="t" style="left:374px;top:184px;color:#fff">Material         ⟲</div>
 <div class="t" style="left:452px;top:184px">▣ ShaderMaterial</div>
 <div class="t" style="left:374px;top:193px">Use Parent Material  ☐ On</div>
 <div class="ihead" style="left:369px;top:202px;width:146px">⊙ Node</div>
 <div class="t" style="left:372px;top:212px">› Process<br>› Physics Interpolation<br>› Auto Translate<br>› Editor Description<br>Script          ⟲ ⚙ hit_flash_sprite_component</div>
 <div class="t" style="left:420px;top:253px">+   Add Metadata</div>
 <div class="udemy" style="left:495px;top:278px">Udemy</div>
</div>

<!-- Cell 8 -->
<div class="c" style="left:523px;top:603px;width:523px">
 <div class="p" style="left:0;top:14px;width:8px;height:272px"></div>
 <div class="menu" style="left:10px"><span class="t" style="left:2px;top:2px">Scene   Project   Debug   Editor   Help</span><span class="t hl" style="left:196px;top:2px">2D    3D    <span style="color:#6ab0ff">Script</span>    Game    AssetLib</span><span class="t" style="left:416px;top:2px">▶  ⏸  ■  ⟳  ▣  ▢  ⚲   <span style="color:#7fb24a">Forward+</span></span></div>
 <div class="p" style="left:12px;top:14px;width:62px;height:138px"></div>
 <div class="t hl" style="left:14px;top:16px">Scene   Import</div>
 <div class="t" style="left:14px;top:28px">+ 🔗 Filt ⚲ ✎ ⋮</div>
 <div class="tree t" style="left:14px;top:40px;width:60px"><div class="hl">⌄ ⊙ UpgradeO ▣ ✎ ◉</div><div>  ▣ AnimationPlayer</div><div>  ♡ HealthComp ▣ ✎</div><div> ⌄ ⌘ Hurtbox ▣ ✎ ◉</div><div>    ▢ CollisionShap ◉</div><div class="sel">  ▣ HitFlas ▣ ✎ ◉</div></div>
 <div class="p" style="left:12px;top:155px;width:62px;height:131px"></div>
 <div class="t hl" style="left:14px;top:157px">FileSystem</div>
 <div class="t" style="left:14px;top:168px">‹ › res://scenes ▣</div>
 <div class="t" style="left:14px;top:178px">Filter Files   ⚲ ⇅</div>
 <div class="tree t" style="left:14px;top:188px;width:60px"><div>  ★ Favorites</div><div>⌄ ▆ res://</div><div> ⌄ ▆ scenes</div><div>   › ▆ ui</div><div>   ⌄ ▆ upgrade</div><div class="sel">     ⊙ upgrade_opt</div><div>    ▢ hires.png</div><div>    ▆ background.p</div><div>    ■ dis_mask.png</div><div>    ▮ particles.png</div></div>
 <div class="d" style="left:76px;top:14px;width:368px;height:12px"></div>
 <div class="t" style="left:80px;top:16px"><span style="color:#7fb24a">▢</span> main_menu   <span class="hl" style="background:#2b313b">⊙ upgrade_option ✕</span>  +</div>
 <div class="p" style="left:76px;top:27px;width:368px;height:10px"></div>
 <div class="t" style="left:80px;top:28px">File   Edit   Search   Go To   Debug                                                                           ▣ Online Docs  ⚲ Search Help  ‹ ›</div>
 <div class="p" style="left:76px;top:38px;width:38px;height:234px"></div>
 <div class="t" style="left:78px;top:40px">Filter Scripts ⚲</div>
 <div class="tree t" style="left:78px;top:52px"><div>⚙ enemy.gd</div><div>⚙ enemy_man...</div><div>⚙ game_ui.gd</div><div>⚙ lobby_man...</div><div>⚙ main.gd</div><div>⚙ upgrade_ma...</div><div class="sel">⚙ upgrade_op...</div></div>
 <div class="t" style="left:78px;top:154px">upgrade_opti ⇵<br>Filter Metho ⚲</div>
 <div class="tree t" style="left:78px;top:176px"><div>_ready</div><div>play_in</div><div>set_peer_id_f...</div><div>set_upgrade_...</div><div>set_upgrade_...</div><div>kill</div><div>despawn</div><div>kill_all</div><div>_on_died</div><div>_on_peer_dis...</div></div>
 <div class="code" style="left:116px;top:38px;width:328px;height:226px;padding-top:3px">
<div><span class="n">4</span><span class="k">signal</span> selected(index: <span class="y">int</span>, for_peer_id: <span class="y">int</span>)</div>
<div><span class="n">5</span></div>
<div><span class="n">6</span><span class="a">@onready</span> <span class="k">var</span> health_component: <span class="y">HealthComponent</span> = <span class="s">$HealthComponent</span></div>
<div><span class="n">7</span><span class="a">@onready</span> <span class="k">var</span> hurtbox_component: <span class="y">HurtboxComponent</span> = <span class="s">$HurtboxComponent</span></div>
<div><span class="n">8</span><span class="a">@onready</span> <span class="k">var</span> animation_player: <span class="y">AnimationPlayer</span> = <span class="s">$AnimationPlayer</span></div>
<div><span class="n">9</span><span class="a">@onready</span> <span class="k">var</span> hit_flash_sprite_component: <span class="y">Sprite2D</span> = <span class="s">$HitFlashSpriteComponent</span></div>
<div><span class="n">10</span></div>
<div><span class="n">11</span><span class="k">var</span> impact_particles_scene: <span class="y">PackedScene</span> = <span class="f">preload</span>(<span class="s">"uid://ilgpar0ydfbp"</span>)</div>
<div><span class="n">12</span><span class="k">var</span> ground_particles_scene: <span class="y">PackedScene</span> = <span class="f">preload</span>(<span class="s">"uid://dbsnrn25wcec"</span>)</div>
<div><span class="n">13</span></div>
<div><span class="n">14</span><span class="k">var</span> upgrade_index: <span class="y">int</span></div>
<div><span class="n">15</span><span class="k">var</span> assigned_resource:</div>
<div><span class="n">16</span><span class="k">var</span> peer_id_filter: <span class="y">int</span></div>
<div><span class="n">17</span></div>
<div><span class="n">18</span></div>
<div><span class="n">19</span><span class="k">func</span> <span class="f">_ready</span>() -&gt; <span class="k">void</span>:</div>
<div><span class="n">20</span>    hurtbox_component.</div>
<div style="background:#262b34"><span class="n">21</span>    hurtbox_component.|</div>
<div><span class="n">22</span>    hurtbox_component.<span class="f">connect</span>(<span style="background:#3b4350">signal: StringName</span>, callable: Callable, flags: <span class="y">int</span> = 0)</div>
<div><span class="n">23</span></div>
<div><span class="n">24</span>    <span class="k">if</span> is_multiplayer_authority():</div>
<div><span class="n">25</span>        multiplayer.peer_disconnected.<span class="f">connect</span>(_on_peer_disconnected)</div>
<div><span class="n">26</span></div>
<div><span class="n">27</span></div>
<div><span class="n">28</span><span class="k">func</span> <span class="f">play_in</span>(delay: <span class="y">float</span> = 0):</div>
<div><span class="n">29</span>    hit_flash_sprite_component.scale = <span class="y">Vector2</span>.ZERO</div>
 </div>
 <div style="position:absolute;left:218px;top:130px;width:94px;height:58px;background:#2b303a;border:1px solid #3e4552;font-family:'Liberation Mono',monospace;font-size:5.5px;line-height:8.2px;color:#e8e8e8;padding-left:2px;white-space:pre"><span class="s">Sn "area_entered"
Sn "area_exited"
Sn "area_shape_entered"
Sn "area_shape_exited"
Sn "body_entered"
Sn "body_exited"
Sn "body_shape_entered"</span></div>
 <div style="position:absolute;left:419px;top:42px;width:18px;height:36px;background:repeating-linear-gradient(#56606c 0 1px,transparent 1px 3px);opacity:.6"></div>
 <div class="d" style="left:116px;top:264px;width:328px;height:8px"></div>
 <div class="t" style="left:358px;top:264px"><span style="color:#e0c050">⚠ 2</span>   100 %    21 : 24   Tabs</div>
 <div class="btab" style="left:76px;top:273px;width:368px">Output   <span style="color:#e0c050">●</span> Debugger (1)   Audio   Animation   Shader Editor                                                                  ⟳ 4.4.stable</div>
 <div class="p" style="left:447px;top:14px;width:76px;height:272px"></div>
 <div class="t hl" style="left:449px;top:16px">Inspector  Node  History</div>
 <div class="t" style="left:449px;top:27px">▣ ▣ ▣ ⋮          ‹</div>
 <div class="t" style="left:449px;top:38px">⚙ shake.gd            ⌄</div>
 <div class="t" style="left:449px;top:49px">Filter Properties       ⚲</div>
 <div class="ihead" style="left:448px;top:60px;width:74px">⊙ Resource</div>
 <div class="t" style="left:449px;top:70px">› Resource</div>
 <div class="ihead" style="left:448px;top:79px;width:74px">⊙ RefCounted</div>
 <div class="t" style="left:460px;top:92px">+    Add Metadata</div>
 <div class="udemy" style="left:510px;top:278px">Ud</div>
</div>

<!-- Cell 9 -->
<div class="c" style="left:1046px;top:603px;width:554px">
 <div class="p" style="left:0;top:14px;width:18px;height:272px"></div>
 <div class="menu" style="left:20px"><span class="t" style="left:2px;top:2px">Scene   Project   Debug   Editor   Help</span><span class="t hl" style="left:186px;top:2px">2D    3D    <span style="color:#6ab0ff">Script</span>    Game    AssetLib</span><span class="t" style="left:404px;top:2px">▶  ⏸  ■  ⟳  ▣  ▢  ⚲   <span style="color:#7fb24a">Forward+</span></span></div>
 <div class="p" style="left:22px;top:14px;width:56px;height:150px"></div>
 <div class="t hl" style="left:24px;top:16px">Scene  Import</div>
 <div class="t" style="left:24px;top:27px">+ 🔗 Filt ⚲ ✎ ⋮</div>
 <div class="t" style="left:26px;top:38px"><span class="sel">▣ HitFlashSpr</span> ✎ ◉</div>
 <div style="position:absolute;left:26px;top:158px;width:40px;height:2px;background:#555"></div>
 <div class="p" style="left:22px;top:167px;width:56px;height:119px"></div>
 <div class="t hl" style="left:24px;top:169px">FileSystem</div>
 <div class="t" style="left:24px;top:179px">‹ › res://scene ▣</div>
 <div class="t" style="left:24px;top:189px">Filter Files   ⚲ ⇅</div>
 <div class="tree t" style="left:26px;top:199px;width:52px"><div>  ★ Favorites</div><div>⌄ ▆ res://</div><div> ⌄ ▆ scenes</div><div>   › ▆ ui</div><div>   ⌄ ▆ upgrade</div><div class="sel">     ⊙ upgrade_op</div><div>    ▢ hires.png</div><div>    ▆ background.p</div><div>    ■ dis_mask.png</div></div>
 <div class="d" style="left:80px;top:14px;width:354px;height:12px"></div>
 <div class="t" style="left:84px;top:16px">▢ main_menu   ⊙ upgrade_option   <span class="hl" style="background:#3a4560">⚙ hit_flash_sprite_component ✕</span>  +</div>
 <div class="p" style="left:80px;top:27px;width:354px;height:10px"></div>
 <div class="t" style="left:84px;top:28px">File   Edit   Search   Go To   Debug                                                            ▣ Online Docs  ⚲ Search Help  ‹ ›</div>
 <div class="p" style="left:80px;top:38px;width:58px;height:132px"></div>
 <div class="t" style="left:82px;top:40px">Filter Scripts             ⚲</div>
 <div class="tree t" style="left:82px;top:51px"><div>▣ hit_flash_sprite_com...</div><div class="sel">▣ top_bar_component...</div><div>▣ lobby_manager.gd</div><div>▣ main.gd</div><div>▣ upgrade_manager.gd</div></div>
 <div class="t" style="left:82px;top:96px">upgrade_option.gd      ⇵<br>Filter Methods           ⚲</div>
 <div class="tree t" style="left:82px;top:118px"><div>_ready</div><div>play_in</div><div>set_peer_id_filter</div><div>set_upgrade_index</div><div>set_upgrade_resource</div></div>
 <div class="code" style="left:140px;top:38px;width:294px;height:124px;padding-top:3px">
<div><span class="n">76</span></div>
<div><span class="n">77</span></div>
<div><span class="n">78</span><span class="a">@rpc</span>(<span class="s">"authority"</span>, <span class="s">"call_local"</span>, <span class="s">"reliable"</span>)</div>
<div><span class="n">79</span><span class="k">func</span> <span class="f">kill_all</span>(killed_name: <span class="y">String</span>):</div>
<div><span class="n">80</span>    <span class="k">var</span> upgrade_option_nodes := <span class="f">get_tree</span>().<span class="f">get_nodes_in_group</span>(<span class="s">"upgrade_option"</span>)</div>
<div><span class="n">81</span></div>
<div><span class="n">82</span>    <span class="k">for</span> upgrade_option <span class="k">in</span> upgrade_option_nodes:</div>
<div><span class="n">83</span>        <span class="k">if</span> upgrade_option.peer_id_filter == peer_id_filter:</div>
<div><span class="n">84</span>            <span class="k">if</span> upgrade_option.name == killed_name:</div>
<div><span class="n">85</span>                upgrade_option.<span class="f">kill</span>()</div>
<div><span class="n">86</span>            <span class="k">else</span>:</div>
<div><span class="n">87</span>                upgrade_option.<span class="f">despawn</span>()</div>
<div><span class="n">88</span></div>
<div><span class="n">89</span></div>
 </div>
 <div style="position:absolute;left:410px;top:50px;width:16px;height:62px;background:repeating-linear-gradient(#56606c 0 1px,transparent 1px 3px);opacity:.6"></div>
 <div class="d" style="left:140px;top:162px;width:294px;height:8px"></div>
 <div class="t" style="left:370px;top:162px">100 %    84 : 1   Tabs</div>
 <div class="p" style="left:80px;top:172px;width:354px;height:100px"></div>
 <div class="t" style="left:84px;top:174px">Session 1  <span style="border:1px solid #6a8ab0;padding:0 2px">Session 2</span></div>
 <div class="t" style="left:84px;top:185px">Stack Trace  <span class="hl" style="background:#333a45">Errors (23)</span>   Evaluator   Profiler   Visual Profiler   Monitors   Video RAM   Misc   Network Profiler</div>
 <div class="t" style="left:84px;top:196px">Expand All    Collapse All</div>
 <div class="d" style="left:82px;top:205px;width:348px;height:66px"></div>
 <div style="position:absolute;left:84px;top:207px;width:336px;height:63px;overflow:hidden;white-space:pre;line-height:8px;font-size:5px"><span style="color:#e0c050">› ● 0:00:00:   The parameter "peer_id" is never used in the function "_on_peer_disconnected()". If this is intended, prefix it with an underscore: "_peer_id".</span><br><span style="color:#e0c050">› ● 0:00:00:   Values of the ternary operator are not mutually compatible.</span><br><span style="color:#e05a5a">› ● 0:00:02:   get_node: Node not found: "/root/Main/Level/Players/2/HitFlashSpriteComponent" (relative to "/root/Main").</span><br><span style="color:#e05a5a">› ● 0:00:02:   process_rpc_node_path: Invalid packet received. Unable to find requested cached node.</span><br><span style="color:#e05a5a">› ● 0:00:02:   get_node: Node not found: "/root/Main/UpgradeOption/HitFlashSpriteComponent" (relative to "/root/Main").</span><br><span style="color:#e05a5a">› ● 0:00:02:   _process_get_node: Invalid packet received. Requested node was not found.</span><br><span style="color:#e05a5a">› ● 0:00:02:   process_rpc: Invalid packet received. Unable to process RPC.</span><br><span style="color:#e05a5a">› ● 0:00:02:   get_node: Node not found: "/root/Main/UpgradeOption/HitFlashSpriteComponent"</span></div>
 <div class="btab" style="left:80px;top:273px;width:354px">Output   <span style="color:#e0c050">●</span> Debugger (23)   Audio   Animation   Shader Editor                                          ⟳ 4.4.stable  ▣ ⋮</div>
 <div class="p" style="left:437px;top:14px;width:82px;height:272px"></div>
 <div class="t hl" style="left:439px;top:16px">Inspector  Node  History</div>
 <div class="t" style="left:439px;top:27px">▣ ▣ ▣ ⋮          ‹ ›</div>
 <div class="t" style="left:439px;top:38px">⚙ hit_flash_sprite_component... ⌄</div>
 <div class="t" style="left:439px;top:49px">Filter Properties           ⚲</div>
 <div class="ihead" style="left:438px;top:59px;width:78px;overflow:hidden">⚙ hit_flash_sprite_component.gd</div>
 <div class="t" style="left:439px;top:69px">Health Compone   Assign...</div>
 <div class="ihead" style="left:438px;top:78px;width:78px">▣ Sprite2D</div>
 <div class="t" style="left:439px;top:88px">Texture          &lt;empty&gt; ⌄<br>› Offset<br>› Animation<br>› Region</div>
 <div class="ihead" style="left:438px;top:124px;width:78px">⊙ Node2D</div>
 <div class="t" style="left:439px;top:133px">› Transform</div>
 <div class="ihead" style="left:438px;top:141px;width:78px">⟋ CanvasItem</div>
 <div class="t" style="left:439px;top:150px">› Visibility<br>› Ordering<br>› Texture<br>› Material</div>
 <div style="position:absolute;left:442px;top:181px;width:35px;height:8px;background:#3a6ab0"></div>
 <div class="t" style="left:444px;top:181px;color:#fff">Material  ⟲</div>
 <div class="t" style="left:480px;top:181px">▣ ShaderM ⌄</div>
 <div style="position:absolute;left:443px;top:191px;width:72px;height:48px;background:repeating-conic-gradient(#8a8a8a 0 25%,#c8c8c8 0 50%) 0 0/10px 10px"></div>
 <div style="position:absolute;left:456px;top:192px;width:48px;height:46px;background:#fff"></div>
 <div class="t" style="left:439px;top:241px">Shader       ⟲ ▣ hit_flash ⌄<br>⌄ Shader Parameters<br>   Percent           1.0<br>⌄ Resource<br>   Local to Scene ⟲ ☑ On</div>
 <div class="p" style="left:521px;top:14px;width:33px;height:272px"></div>
 <div class="udemy" style="left:530px;top:278px">Udemy</div>
</div>

</body></html>
